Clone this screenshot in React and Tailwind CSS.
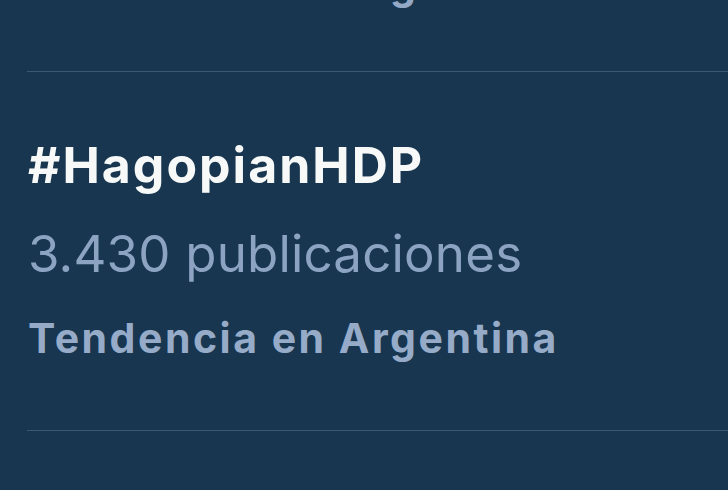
export default function App() {
  const font = { fontFamily: 'Inter, "Noto Sans", sans-serif' };
  return (
    <div
      className="flex flex-col w-[728px] h-[490px] overflow-hidden bg-[#18364f] pl-[27px]"
      style={font}
    >
      {/* previous trend, scrolled off the top */}
      <div className="shrink-0 -mt-[40px] pb-[63px] border-b border-[#3b5873]">
        <p className="text-[41px] leading-[48px] font-bold tracking-[2.5px] text-[#93a9c6] pl-[1px]">
          Tendencia en Argentina
        </p>
      </div>

      {/* trend item */}
      <div className="shrink-0 pt-[65px] pb-[68px] border-b border-[#3b5873] pl-[1px]">
        <p className="text-[50px] leading-[56px] font-bold tracking-[2px] text-[#f7f9f9]">
          #HagopianHDP
        </p>
        <p className="mt-[31px] text-[51px] leading-[60px] tracking-[0.2px] text-[#8ca4c2]">
          3.430 publicaciones
        </p>
        <p className="mt-[30px] text-[41px] leading-[48px] font-bold tracking-[2.5px] text-[#96abc8]">
          Tendencia en Argentina
        </p>
      </div>
    </div>
  );
}
